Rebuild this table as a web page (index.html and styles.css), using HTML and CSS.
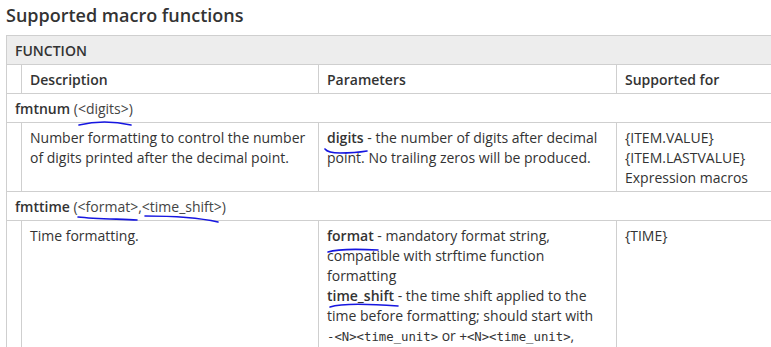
FILE: index.html
```html
<!DOCTYPE html>
<html lang="en">
<head>
    <meta charset="UTF-8">
    <meta name="viewport" content="width=device-width, initial-scale=1.0">
    <title>Supported macro functions</title>
    <link rel="stylesheet" href="styles.css">
</head>
<body>
    <div id="page">
        <h2 class="page-title">Supported macro functions</h2>
        <table class="macro-table">
            <colgroup>
                <col class="col-indent">
                <col class="col-desc">
                <col class="col-params">
                <col class="col-support">
            </colgroup>
            <thead>
                <tr class="group-head">
                    <th colspan="4">FUNCTION</th>
                </tr>
                <tr class="sub-head">
                    <th></th>
                    <th>Description</th>
                    <th>Parameters</th>
                    <th>Supported for</th>
                </tr>
            </thead>
            <tbody>
                <tr class="func-row">
                    <td colspan="4"><b>fmtnum</b> <span class="args">(&lt;digits&gt;)</span></td>
                </tr>
                <tr>
                    <td></td>
                    <td>Number formatting to control the number of digits printed after the decimal point.</td>
                    <td><b>digits</b> - the number of digits after decimal point. No trailing zeros will be produced.</td>
                    <td>{ITEM.VALUE}<br>{ITEM.LASTVALUE}<br>Expression macros</td>
                </tr>
                <tr class="func-row">
                    <td colspan="4"><b>fmttime</b> <span class="args">(&lt;format&gt;,&lt;time_shift&gt;)</span></td>
                </tr>
                <tr>
                    <td></td>
                    <td>Time formatting.</td>
                    <td><b>format</b> - mandatory format string, compatible with strftime function formatting<br>
                        <b>time_shift</b> - the time shift applied to the time before formatting; should start with <code>-&lt;N&gt;&lt;time_unit&gt;</code> or <code>+&lt;N&gt;&lt;time_unit&gt;</code>, where N is the number of time units to add or subtract.</td>
                    <td>{TIME}</td>
                </tr>
            </tbody>
        </table>

        <!-- pen marks drawn over the table -->
        <svg class="marks" width="771" height="347" viewBox="0 0 771 347">
            <g fill="none" stroke="#1616e0" stroke-width="1.6" stroke-linecap="round" stroke-linejoin="round">
                <path d="M79 122 Q104 116 131 122"/>
                <path d="M78 214 C95 216 120 216 137 217"/>
                <path d="M145 213 C170 213 200 215 218 219"/>
                <path d="M325 146 Q328 150 340 150 Q355 150 367 148"/>
                <path d="M328 249 Q340 245 378 247"/>
                <path d="M330 304 Q345 299 398 303"/>
            </g>
        </svg>
    </div>
</body>
</html>
```

FILE: styles.css
```css
html, body {
    margin: 0;
    overflow: hidden;
}

body {
    font-family: 'Open Sans', 'Noto Sans', sans-serif;
    font-size: 14px;
    line-height: 20px;
    color: #333;
    background: #fff;
}

#page {
    position: relative;
    padding: 0 6px;
}

.page-title {
    font-size: 18px;
    font-weight: 600;
    line-height: 24px;
    margin: 3px 0 8px;
    color: #333;
}

.macro-table {
    border-collapse: collapse;
    table-layout: fixed;
    width: 810px;
}

.col-indent {
    width: 15px;
}

.col-desc {
    width: 297px;
}

.col-params {
    width: 298px;
}

.macro-table th,
.macro-table td {
    border: 1px solid #cfcfcf;
    padding: 5px 8px 3px;
    text-align: left;
    vertical-align: top;
}

.macro-table th {
    font-weight: 600;
}

.group-head th {
    background: #ededed;
}

.macro-table b {
    font-weight: 600;
}

.args {
    color: #444;
}

code {
    font-family: 'DejaVu Sans Mono', 'Liberation Mono', monospace;
    font-size: 12.3px;
    white-space: nowrap;
}

.marks {
    position: absolute;
    top: 0;
    left: 0;
    pointer-events: none;
}
```
